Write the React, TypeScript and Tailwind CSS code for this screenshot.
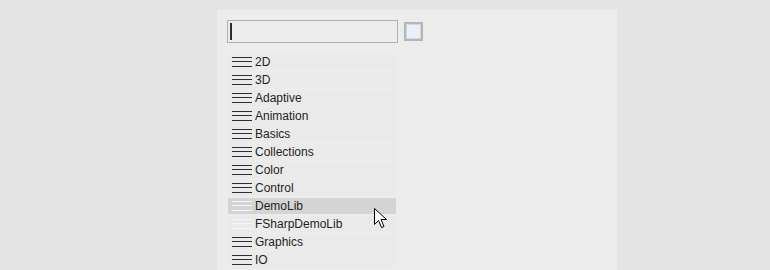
const items = [
  { name: "2D" },
  { name: "3D" },
  { name: "Adaptive" },
  { name: "Animation" },
  { name: "Basics" },
  { name: "Collections" },
  { name: "Color" },
  { name: "Control" },
  { name: "DemoLib", selected: true, empty: true },
  { name: "FSharpDemoLib", empty: true },
  { name: "Graphics" },
  { name: "IO" },
];

function LinesIcon({ light }: { light?: boolean }) {
  const line = light ? "bg-[#f3f6fa]" : "bg-[#2e2e2e]";
  return (
    <div className="-mt-px flex h-[12px] w-[20px] shrink-0 flex-col justify-between py-[1px]">
      <div className={`h-px w-full ${line}`} />
      <div className={`h-px w-full ${line}`} />
      <div className={`h-px w-full ${line}`} />
    </div>
  );
}

function Cursor() {
  return (
    <svg
      className="pointer-events-none absolute left-[373px] top-[207px]"
      width="16"
      height="22"
      viewBox="0 0 16 22"
    >
      <path
        d="M1.5 1.5 L1.5 17.5 L5.5 13.5 L8.5 20.5 L11 19.5 L8 12.5 L13.5 12.5 Z"
        fill="#ffffff"
        stroke="#000000"
        strokeWidth="1"
        strokeLinejoin="miter"
      />
    </svg>
  );
}

export default function App() {
  return (
    <div
      className="relative h-[270px] w-[770px] overflow-hidden bg-[#e4e4e4] pt-[10px] text-[12px] text-[#1e1e1e]"
      style={{ fontFamily: '"Liberation Sans", Arial, sans-serif' }}
    >
      <div className="ml-[217px] h-[260px] w-[400px] bg-[#ececec] pl-[10px] pt-[10px]">
        <div className="flex items-center">
          <div className="flex h-[23px] w-[171px] items-center border border-[#b0b0b0] bg-[#ececec] pl-[2px]">
            <div className="h-[17px] w-[2px] bg-[#2a2a2a]" />
          </div>
          <div className="ml-[6px] h-[19px] w-[19px] border-2 border-[#b5b5b5] bg-[#e9f0fa] shadow-[inset_0_0_0_1px_#d4d8de]" />
        </div>
        <div className="ml-[1px] mt-[11px] flex flex-col gap-[2px]">
          {items.map((it) => (
            <div
              key={it.name}
              className={`flex h-[16px] w-[168px] items-center gap-[3px] pl-[4px] ${
                it.selected ? "bg-[#d4d4d4]" : "bg-[#eaeaea]"
              }`}
            >
              <LinesIcon light={it.empty} />
              <span className="-mt-px leading-[16px]">{it.name}</span>
            </div>
          ))}
        </div>
      </div>
      <Cursor />
    </div>
  );
}
